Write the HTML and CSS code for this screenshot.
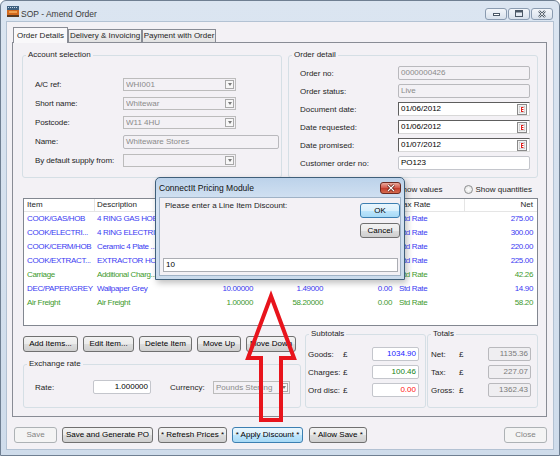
FILE: index.html
```html
<!DOCTYPE html>
<html lang="en">
<head>
    <meta charset="UTF-8">
    <title>SOP - Amend Order</title>
    <link rel="stylesheet" href="styles.css">
</head>
<body>
    <div class="window">
        <div class="titlebar">
            <svg class="app-icon" width="12" height="11" viewBox="0 0 12 11">
                <rect x="0" y="0" width="12" height="4" fill="#3f607f"/>
                <path d="M1 1h1v1H1zM3 1h1v1H3zM5 1h1v1H5zM7 1h1v1H7zM9 1h1v1H9z" fill="#c9d8e6"/>
                <rect x="0" y="4" width="12" height="5" fill="#d2691e"/>
                <rect x="2" y="5" width="8" height="2" fill="#f0a050"/>
                <rect x="0" y="9" width="12" height="2" fill="#5a3a20"/>
            </svg>
            <span class="title">SOP - Amend Order</span>
            <div class="caption-buttons">
                <span class="cap-btn">
                    <svg width="9" height="6" viewBox="0 0 9 6"><rect x="1.5" y="2.5" width="6" height="2" fill="#fff" stroke="#4b5866"/></svg>
                </span>
                <span class="cap-btn">
                    <svg width="10" height="8" viewBox="0 0 10 8"><rect x="1.5" y="0.5" width="7" height="6" fill="none" stroke="#4b5866"/><rect x="2" y="1" width="6" height="1.5" fill="#4b5866"/></svg>
                </span>
                <span class="cap-btn">
                    <svg width="10" height="8" viewBox="0 0 10 8"><path d="M2 1l6 6M8 1L2 7" stroke="#4b5866" stroke-width="2.4"/><path d="M2 1l6 6M8 1L2 7" stroke="#fff" stroke-width="0.8"/></svg>
                </span>
            </div>
        </div>

        <div class="client">
            <div class="tabs">
                <div class="tab active">Order Details</div>
                <div class="tab">Delivery &amp; Invoicing</div>
                <div class="tab">Payment with Order</div>
            </div>

            <div class="tab-page">
                <div class="top-row">
                    <fieldset class="group account">
                        <legend>Account selection</legend>
                        <div class="group-body">
                            <div class="form-row"><span class="lbl">A/C ref:</span><div class="combo off"><span>WHI001</span><i class="drop"></i></div></div>
                            <div class="form-row"><span class="lbl">Short name:</span><div class="combo off"><span>Whitewar</span><i class="drop"></i></div></div>
                            <div class="form-row"><span class="lbl">Postcode:</span><div class="combo off"><span>W11 4HU</span><i class="drop"></i></div></div>
                            <div class="form-row"><span class="lbl">Name:</span><div class="field off name">Whiteware Stores</div></div>
                            <div class="form-row"><span class="lbl">By default supply from:</span><div class="combo off"><span></span><i class="drop"></i></div></div>
                        </div>
                    </fieldset>

                    <fieldset class="group order">
                        <legend>Order detail</legend>
                        <div class="group-body">
                            <div class="form-row"><span class="lbl">Order no:</span><div class="field off">0000000426</div></div>
                            <div class="form-row"><span class="lbl">Order status:</span><div class="field off">Live</div></div>
                            <div class="form-row"><span class="lbl">Document date:</span><div class="field date"><span>01/06/2012</span><svg class="cal" width="10" height="11" viewBox="0 0 10 11"><rect x=".5" y=".5" width="9" height="10" fill="#f2f2f2" stroke="#8a8a8a"/><rect x="2.25" y="2.25" width="5.5" height="6.5" fill="#fff" stroke="#b4b4b4" stroke-width=".5"/><path d="M4 3h2.5v1H5v1h1.5v1H5v1h1.5v1H4z" fill="#e0201c"/></svg></div></div>
                            <div class="form-row"><span class="lbl">Date requested:</span><div class="field date"><span>01/06/2012</span><svg class="cal" width="10" height="11" viewBox="0 0 10 11"><rect x=".5" y=".5" width="9" height="10" fill="#f2f2f2" stroke="#8a8a8a"/><rect x="2.25" y="2.25" width="5.5" height="6.5" fill="#fff" stroke="#b4b4b4" stroke-width=".5"/><path d="M4 3h2.5v1H5v1h1.5v1H5v1h1.5v1H4z" fill="#e0201c"/></svg></div></div>
                            <div class="form-row"><span class="lbl">Date promised:</span><div class="field date"><span>01/07/2012</span><svg class="cal" width="10" height="11" viewBox="0 0 10 11"><rect x=".5" y=".5" width="9" height="10" fill="#f2f2f2" stroke="#8a8a8a"/><rect x="2.25" y="2.25" width="5.5" height="6.5" fill="#fff" stroke="#b4b4b4" stroke-width=".5"/><path d="M4 3h2.5v1H5v1h1.5v1H5v1h1.5v1H4z" fill="#e0201c"/></svg></div></div>
                            <div class="form-row"><span class="lbl">Customer order no:</span><div class="field">PO123</div></div>
                        </div>
                    </fieldset>
                </div>

                <div class="view-opts">
                    <label class="radio"><i></i>Show values</label>
                    <label class="radio"><i></i>Show quantities</label>
                </div>

                <div class="listview">
                    <div class="lv-row lv-head">
                        <span>Item</span><span>Description</span><span class="num">Quantity</span><span class="num">Price</span><span class="num">Discount</span><span>Tax Rate</span><span class="num">Net</span>
                    </div>
                    <div class="lv-row blue">
                        <span>COOK/GAS/HOB</span><span>4 RING GAS HOB</span><span class="num">1.00000</span><span class="num">275.00000</span><span class="num">0.00</span><span>Std Rate</span><span class="num">275.00</span>
                    </div>
                    <div class="lv-row blue">
                        <span>COOK/ELECTRI...</span><span>4 RING ELECTRI...</span><span class="num">1.00000</span><span class="num">300.00000</span><span class="num">0.00</span><span>Std Rate</span><span class="num">300.00</span>
                    </div>
                    <div class="lv-row blue">
                        <span>COOK/CERM/HOB</span><span>Ceramic 4 Plate ...</span><span class="num">1.00000</span><span class="num">220.00000</span><span class="num">0.00</span><span>Std Rate</span><span class="num">220.00</span>
                    </div>
                    <div class="lv-row blue">
                        <span>COOK/EXTRACT...</span><span>EXTRACTOR HOO...</span><span class="num">1.00000</span><span class="num">225.00000</span><span class="num">0.00</span><span>Std Rate</span><span class="num">225.00</span>
                    </div>
                    <div class="lv-row green">
                        <span>Carriage</span><span>Additional Charg...</span><span class="num">1.00000</span><span class="num">42.26000</span><span class="num">0.00</span><span>Std Rate</span><span class="num">42.26</span>
                    </div>
                    <div class="lv-row blue">
                        <span>DEC/PAPER/GREY</span><span>Wallpaper Grey</span><span class="num">10.00000</span><span class="num">1.49000</span><span class="num">0.00</span><span>Std Rate</span><span class="num">14.90</span>
                    </div>
                    <div class="lv-row green">
                        <span>Air Freight</span><span>Air Freight</span><span class="num">1.00000</span><span class="num">58.20000</span><span class="num">0.00</span><span>Std Rate</span><span class="num">58.20</span>
                    </div>
                </div>

                <div class="lower">
                    <div class="lower-left">
                        <div class="item-buttons">
                            <button class="btn w-add">Add Items...</button>
                            <button class="btn w-edit">Edit Item...</button>
                            <button class="btn w-del">Delete Item</button>
                            <button class="btn w-up">Move Up</button>
                            <button class="btn w-down">Move Down</button>
                        </div>
                        <fieldset class="group exchange">
                            <legend>Exchange rate</legend>
                            <div class="group-body">
                                <div class="form-row">
                                    <span class="lbl">Rate:</span>
                                    <div class="field num rate">1.000000</div>
                                    <span class="lbl currency">Currency:</span>
                                    <div class="combo off cur"><span>Pounds Sterling</span><i class="drop"></i></div>
                                </div>
                            </div>
                        </fieldset>
                    </div>

                    <fieldset class="group subtotals">
                        <legend>Subtotals</legend>
                        <div class="group-body">
                            <div class="form-row"><span class="lbl">Goods:</span><span class="pound">£</span><div class="field num goods">1034.90</div></div>
                            <div class="form-row"><span class="lbl">Charges:</span><span class="pound">£</span><div class="field num charges">100.46</div></div>
                            <div class="form-row"><span class="lbl">Ord disc:</span><span class="pound">£</span><div class="field num disc">0.00</div></div>
                        </div>
                    </fieldset>

                    <fieldset class="group totals">
                        <legend>Totals</legend>
                        <div class="group-body">
                            <div class="form-row"><span class="lbl">Net:</span><span class="pound">£</span><div class="field num off">1135.36</div></div>
                            <div class="form-row"><span class="lbl">Tax:</span><span class="pound">£</span><div class="field num off">227.07</div></div>
                            <div class="form-row"><span class="lbl">Gross:</span><span class="pound">£</span><div class="field num off">1362.43</div></div>
                        </div>
                    </fieldset>
                </div>
            </div>

            <div class="footer">
                <button class="btn disabled w-save">Save</button>
                <button class="btn w-gen">Save and Generate PO</button>
                <button class="btn w-refresh">* Refresh Prices *</button>
                <button class="btn default w-apply">* Apply Discount *</button>
                <button class="btn w-allow">* Allow Save *</button>
                <button class="btn disabled w-close">Close</button>
            </div>
        </div>

        <div class="dialog">
            <div class="dlg-title">
                <span>ConnectIt Pricing Module</span>
                <span class="dlg-close">
                    <svg width="10" height="8" viewBox="0 0 10 8"><path d="M2 1l6 6M8 1L2 7" stroke="#5a1a12" stroke-width="2.6"/><path d="M2 1l6 6M8 1L2 7" stroke="#fff" stroke-width="1.1"/></svg>
                </span>
            </div>
            <div class="dlg-body">
                <div class="dlg-top">
                    <p class="prompt">Please enter a Line Item Discount:</p>
                    <div class="dlg-buttons">
                        <button class="btn default">OK</button>
                        <button class="btn">Cancel</button>
                    </div>
                </div>
                <div class="field dlg-input">10</div>
            </div>
        </div>

        <svg class="arrow" width="62" height="142" viewBox="0 0 62 142">
            <polygon points="31,11 54,73 41,73 41,135 21,135 21,73 8,73" fill="none" stroke="#e8141c" stroke-width="4"/>
        </svg>
    </div>
</body>
</html>
```

FILE: styles.css
```css
* {
    margin: 0;
    padding: 0;
    box-sizing: border-box;
}

body {
    width: 560px;
    height: 456px;
    overflow: hidden;
    font-family: 'Liberation Sans', Arial, sans-serif;
    font-size: 8px;
    color: #1e1e1e;
    background: #fff;
}

button {
    font: inherit;
    color: inherit;
}

/* window frame */

.window {
    position: relative;
    width: 560px;
    height: 456px;
    display: flex;
    flex-direction: column;
    padding: 0 6px 6px;
    border: 1px solid #6f7f92;
    border-radius: 6px 6px 0 0;
    background: linear-gradient(#dbe5f1, #cfdceb);
}

.titlebar {
    height: 21px;
    display: flex;
    align-items: flex-start;
}

.app-icon {
    margin-top: 5px;
    margin-right: 2px;
}

.title {
    margin-top: 7px;
    line-height: 12px;
    font-size: 8.5px;
    color: #3a3a3a;
}

.caption-buttons {
    display: flex;
    gap: 1px;
    margin-left: auto;
    margin-top: 7px;
}

.cap-btn {
    width: 22px;
    height: 12px;
    display: flex;
    align-items: center;
    justify-content: center;
    border: 1px solid #8a9bb0;
    border-radius: 3px;
    background: linear-gradient(#f3f6fa, #d8e1ec);
}

.client {
    flex: 1;
    display: flex;
    flex-direction: column;
    padding: 5px 6px 6px 5px;
    background: #f3f1f5;
    box-shadow: 0 0 0 1px #b3c2d3;
}

/* tabs */

.tabs {
    height: 15px;
    display: flex;
    align-items: flex-start;
    padding-left: 1px;
}

.tab {
    height: 13px;
    margin-top: 2px;
    line-height: 12px;
    text-align: center;
    border: 1px solid #898c95;
    border-bottom: none;
    background: linear-gradient(#f4f4f4, #e2e2e2);
    width: 74px;
}

.tab.active {
    position: relative;
    z-index: 1;
    width: 55px;
    height: 16px;
    margin-top: 0;
    line-height: 15px;
    background: #f9f8fa;
}

.tab-page {
    height: 375px;
    display: flex;
    flex-direction: column;
    padding: 7px 8px 8px 9px;
    border: 1px solid #898c95;
}

/* group boxes */

.group {
    border: 1px solid #d5dfe5;
    border-radius: 3px;
    min-width: 0;
}

.group legend {
    margin-left: 3px;
    padding: 0 2px;
    line-height: 10px;
}

.top-row {
    height: 128px;
    display: flex;
    gap: 6px;
}

.account {
    width: 260px;
}

.account .group-body {
    padding: 15px 0 0 12px;
}

.order {
    flex: 1;
}

.order .group-body {
    padding: 4px 0 0 11px;
}

.form-row {
    display: flex;
    align-items: center;
    height: 18px;
    white-space: nowrap;
}

.account .form-row {
    height: 19px;
}

.account .lbl {
    width: 88px;
    letter-spacing: -0.1px;
}

.order .lbl {
    width: 98px;
}

/* inputs */

.field {
    height: 14px;
    line-height: 12px;
    padding: 0 2px;
    border: 1px solid #c4c6cc;
    border-radius: 2px;
    background: #fff;
    color: #000;
    overflow: hidden;
}

.field.off {
    background: #f3f1f5;
    border-color: #b9b9bd;
    color: #8a8a8a;
}

.field.num {
    text-align: right;
}

.order .field {
    width: 132px;
}

.field.name {
    width: 156px;
}

.field.date {
    display: flex;
    align-items: center;
    border-radius: 0;
    border-color: #d8d8d8;
    border-top-color: #5e5e5e;
    border-left-color: #5e5e5e;
}

.field.date span {
    flex: 1;
}

.combo {
    width: 113px;
    height: 13px;
    display: flex;
    align-items: center;
    padding-left: 2px;
    border: 1px solid #bcbcbc;
    background: #f3f1f5;
    color: #8a8a8a;
}

.combo span {
    flex: 1;
    overflow: hidden;
}

.drop {
    width: 9px;
    height: 9px;
    margin-right: 1px;
    display: flex;
    align-items: center;
    justify-content: center;
    border: 1px solid #a8a8a8;
    background: #f7f7f7;
}

.drop::after {
    content: "";
    border-left: 2.5px solid transparent;
    border-right: 2.5px solid transparent;
    border-top: 3px solid #7a7a7a;
}

/* list options */

.view-opts {
    height: 20px;
    display: flex;
    align-items: center;
    justify-content: flex-end;
    gap: 21px;
    padding: 3px 6px 0 0;
}

.radio {
    display: flex;
    align-items: center;
    gap: 3px;
}

.radio i {
    width: 9px;
    height: 9px;
    border-radius: 50%;
    border: 1px solid #8e8f90;
    background: radial-gradient(#ffffff, #dcdcdc);
}

/* list view */

.listview {
    height: 128px;
    margin-left: 1px;
    border: 1px solid #828790;
    background: #fff;
}

.lv-row {
    display: grid;
    grid-template-columns: 71px 95px 67px 70px 70px 68px 1fr;
    height: 14px;
    line-height: 14px;
    letter-spacing: -0.35px;
}

.lv-row span {
    white-space: nowrap;
    overflow: hidden;
}

.lv-row span:nth-child(1) { padding-left: 3px; }
.lv-row span:nth-child(2) { padding-left: 2px; }
.lv-row span:nth-child(3) { padding-right: 4px; }
.lv-row span:nth-child(4) { padding-right: 4px; }
.lv-row span:nth-child(5) { padding-right: 5px; }
.lv-row span:nth-child(6) { padding-left: 2px; }
.lv-row span:nth-child(7) { padding-right: 4px; }

.num {
    text-align: right;
}

.lv-head {
    height: 13px;
    line-height: 12px;
    letter-spacing: 0;
    border-bottom: 1px solid #e5e5e5;
    color: #1e1e1e;
}

.lv-head span {
    border-right: 1px solid #e5e5e5;
}

.lv-head span:last-child {
    border-right: none;
}

.blue {
    color: #3b3bf2;
}

.green {
    color: #3e9a2c;
}

/* lower section */

.lower {
    height: 79px;
    display: flex;
    margin: 3px 0 0 1px;
}

.lower-left {
    width: 278px;
}

.item-buttons {
    display: flex;
    gap: 5px;
    margin-top: 7px;
}

.exchange {
    height: 49px;
    margin-top: 7px;
}

.exchange .group-body {
    padding: 9px 0 0 11px;
}

.exchange .lbl {
    width: 58px;
}

.field.rate {
    width: 58px;
}

.exchange .currency {
    width: 43px;
    margin-left: 19px;
}

.combo.cur {
    width: 77px;
}

.subtotals {
    width: 121px;
    margin-left: 4px;
}

.subtotals .group-body {
    padding: 6px 0 0 2px;
}

.subtotals .lbl {
    width: 35px;
}

.totals {
    width: 111px;
    margin-left: 1px;
}

.totals .group-body {
    padding: 6px 0 0 3px;
}

.totals .lbl {
    width: 28px;
}

.pound {
    width: 29px;
}

.subtotals .field {
    width: 47px;
}

.totals .field {
    width: 43px;
    background: #efeef1;
    color: #7a7a7a;
}

.goods { color: #1a1aff; }
.charges { color: #148214; }
.disc { color: #ff1010; }

/* buttons */

.btn {
    height: 16px;
    padding: 0;
    line-height: 14px;
    text-align: center;
    white-space: nowrap;
    border: 1px solid #707070;
    border-radius: 3px;
    background: linear-gradient(#f2f2f2 0%, #ebebeb 50%, #dddddd 50%, #cfcfcf 100%);
    color: #000;
}

.btn.default {
    border-color: #3c7fb1;
    background: linear-gradient(#eaf6fd 0%, #d9f0fc 50%, #bee6fd 50%, #a7d9f5 100%);
}

.btn.disabled {
    border-color: #adb2b5;
    background: #f4f4f4;
    color: #838383;
}

.w-add { width: 55px; }
.w-edit { width: 51px; }
.w-del { width: 53px; }
.w-up { width: 44px; }
.w-down { width: 50px; }

.footer {
    display: flex;
    gap: 5px;
    margin-top: 10px;
    padding-left: 2px;
}

.w-save { width: 43px; }
.w-gen { width: 91px; }
.w-refresh { width: 69px; }
.w-apply { width: 71px; }
.w-allow { width: 58px; margin-left: 1px; }
.w-close { width: 43px; margin-left: auto; }

/* modal dialog */

.dialog {
    position: absolute;
    left: 154px;
    top: 176px;
    width: 250px;
    height: 103px;
    display: flex;
    flex-direction: column;
    padding: 0 3px 3px;
    border: 1px solid #3f5f7a;
    border-radius: 5px 5px 0 0;
    background: linear-gradient(#bcd2ea, #d6e4f3 25%, #cbdbec);
    box-shadow: 2px 3px 6px rgba(0, 0, 0, 0.25);
}

.dlg-title {
    height: 19px;
    display: flex;
    align-items: center;
    font-size: 8.5px;
    color: #111;
}

.dlg-close {
    width: 21px;
    height: 12px;
    margin-left: auto;
    display: flex;
    align-items: center;
    justify-content: center;
    border: 1px solid #6d2a22;
    border-radius: 3px;
    background: linear-gradient(#eaa99c, #d2574a 50%, #c13a2c 50%, #d56b4d);
}

.dlg-body {
    flex: 1;
    display: flex;
    flex-direction: column;
    padding: 5px 0 3px 3px;
    border: 1px solid #9fb2c6;
    background: #f3f1f5;
}

.dlg-top {
    flex: 1;
    display: flex;
}

.prompt {
    flex: 1;
    margin-top: -2px;
    padding-left: 2px;
    line-height: 10px;
}

.dlg-buttons {
    width: 40px;
    display: flex;
    flex-direction: column;
    gap: 5px;
}

.dlg-buttons .btn {
    height: 15px;
}

.dlg-input {
    margin-right: 2px;
    border-color: #abadb3;
    border-radius: 0;
}

.arrow {
    position: absolute;
    left: 239px;
    top: 284px;
}
```
